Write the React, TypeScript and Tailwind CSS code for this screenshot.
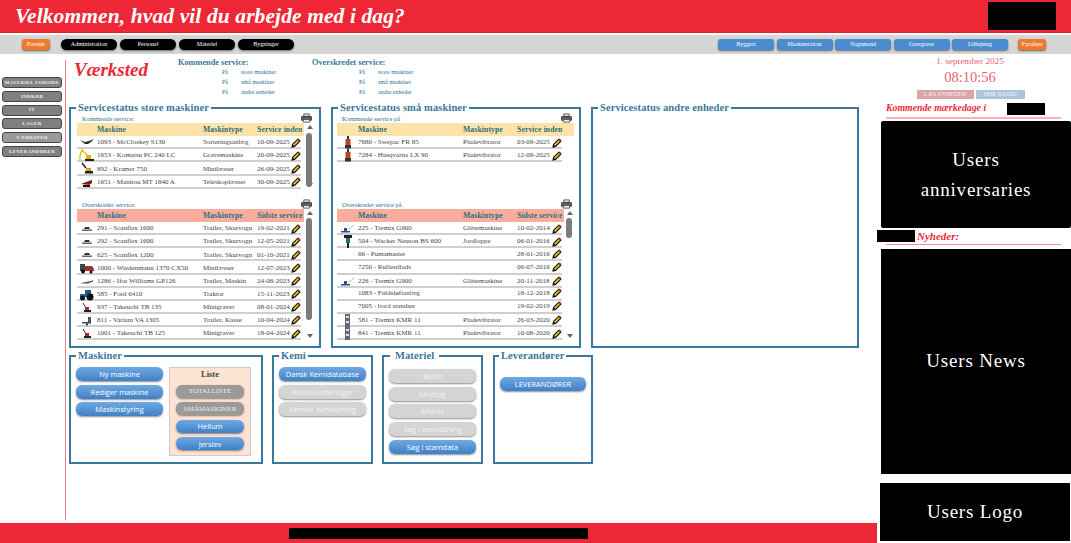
import type { ReactNode } from 'react';

const serif = 'font-["Liberation_Serif",serif]';

type Row = { icon?: string; name: string; type?: string; date: string };

const storeNext: Row[] = [
  { icon: 'screener', name: '1093 - McCloskey S130', type: 'Sorteringsanlæg', date: '10-09-2025' },
  { icon: 'digger', name: '1653 - Komatsu PC 240 LC', type: 'Gravemaskine', date: '20-09-2025' },
  { icon: 'kramer', name: '892 - Kramer 750', type: 'Minilæsser', date: '26-09-2025' },
  { icon: 'loader', name: '1651 - Manitou MT 1840 A', type: 'Teleskoplæsser', date: '30-09-2025' },
];

const storeLate: Row[] = [
  { icon: 'wagon', name: '291 - Scanflex 1600', type: 'Trailer, Skurvogn', date: '19-02-2021' },
  { icon: 'wagon', name: '292 - Scanflex 1600', type: 'Trailer, Skurvogn', date: '12-05-2021' },
  { icon: 'wagon', name: '625 - Scanflex 1200', type: 'Trailer, Skurvogn', date: '01-10-2021' },
  { icon: 'mower', name: '1000 - Wiedenmann 1370 CX50', type: 'Minilæsser', date: '12-07-2023' },
  { icon: 'flat', name: '1286 - Ifor Williams GP126', type: 'Trailer, Maskin', date: '24-08-2023' },
  { icon: 'tractor', name: '585 - Ford 6410', type: 'Traktor', date: '15-11-2023' },
  { icon: 'mini', name: '937 - Takeuchi TB 135', type: 'Minigraver', date: '08-01-2024' },
  { icon: 'box', name: '811 - Variant VA 1305', type: 'Trailer, Kasse', date: '10-04-2024' },
  { icon: 'mini', name: '1001 - Takeuchi TB 125', type: 'Minigraver', date: '18-04-2024' },
];

const smallNext: Row[] = [
  { icon: 'plate', name: '7680 - Swepac FR 85', type: 'Pladevibrator', date: '03-09-2025' },
  { icon: 'plate', name: '7284 - Husqvarna LX 90', type: 'Pladevibrator', date: '12-09-2025' },
];

const smallLate: Row[] = [
  { icon: 'trowel', name: '225 - Tremix G900', type: 'Glittemaskine', date: '10-02-2014' },
  { icon: 'rammer', name: '504 - Wacker Neuson BS 600', type: 'Jordloppe', date: '06-01-2016' },
  { name: '66 - Pumamaster', date: '28-01-2016' },
  { name: '7250 - Rullestilads', date: '06-07-2016' },
  { icon: 'trowel', name: '226 - Tremix G900', type: 'Glittemaskine', date: '20-11-2018' },
  { name: '1083 - Fuldsløftanlæg', date: '18-12-2018' },
  { name: '7005 - bord standser', date: '19-02-2019' },
  { icon: 'kmr', name: '581 - Tremix KMR 11', type: 'Pladevibrator', date: '26-03-2020' },
  { icon: 'kmr', name: '841 - Tremix KMR 11', type: 'Pladevibrator', date: '10-08-2020' },
];

function Machine({ kind }: { kind?: string }) {
  if (!kind) return null;
  return (
    <svg viewBox="0 0 16 13" className="h-[13px] w-[16px]">
      {kind === 'screener' && <path d="M1 4l5 2 4-1 5-2-3 3-3 2H6z" fill="#23351f" />}
      {kind === 'digger' && (
        <g>
          <path d="M1 11V6l2-5 5 5" fill="none" stroke="#e2b100" strokeWidth="1.2" />
          <path d="M7 6h5v4H7z" fill="#e2b100" />
          <path d="M6 10h9v2H6z" fill="#222" />
        </g>
      )}
      {kind === 'kramer' && (
        <g>
          <path d="M3 1l4 5" stroke="#222" strokeWidth="1.5" />
          <path d="M7 6h5v3H7z" fill="#c9a31c" />
          <path d="M6 9h8v2.500H6z" fill="#222" />
        </g>
      )}
      {kind === 'loader' && (
        <g>
          <path d="M2 8l5-2 6-2v3l-3 2z" fill="#7b1d1d" />
          <path d="M4 9h7v2H4z" fill="#111" />
        </g>
      )}
      {kind === 'wagon' && (
        <g>
          <path d="M5 7l1-2h4l1 2z" fill="#333" />
          <path d="M3 7.500h10v1.500H3z" fill="#666" />
        </g>
      )}
      {kind === 'mower' && (
        <g>
          <path d="M1 3h5v7H1z" fill="#444" />
          <path d="M6 5h7l2 3v2H6z" fill="#a33030" />
          <circle cx="4" cy="10.500" r="2" fill="#111" />
          <circle cx="12" cy="11" r="1.500" fill="#111" />
        </g>
      )}
      {kind === 'flat' && <path d="M2 8l10-2 2-1v1.500L9 8.500H2z" fill="#555" />}
      {kind === 'tractor' && (
        <g>
          <path d="M6 2h6v4H6z" fill="#29527f" />
          <path d="M1 6h13v3H1z" fill="#2d6299" />
          <circle cx="11" cy="9" r="3.500" fill="#111" />
          <circle cx="3.500" cy="10" r="2.500" fill="#111" />
        </g>
      )}
      {kind === 'mini' && (
        <g>
          <path d="M4 2l3 5" stroke="#333" strokeWidth="1" />
          <path d="M6 6h4v3H6z" fill="#b22" />
          <path d="M5 9h7v2H5z" fill="#222" />
        </g>
      )}
      {kind === 'box' && (
        <g>
          <path d="M9 3h3v5H9z" fill="#555" />
          <path d="M3 8h9v1.500H3z" fill="#444" />
          <circle cx="8" cy="10.500" r="1" fill="#111" />
        </g>
      )}
      {kind === 'plate' && (
        <g>
          <path d="M7 0h2v3H7z" fill="#333" />
          <path d="M5.500 3h5v6h-5z" fill="#b4432a" />
          <path d="M5 9h6v3.500H5z" fill="#333" />
        </g>
      )}
      {kind === 'trowel' && (
        <g>
          <path d="M8 8l6-5" stroke="#999" strokeWidth=".7" />
          <path d="M4 6h3v3H4z" fill="#26508f" />
          <path d="M1 9h9v1.500H1z" fill="#26508f" />
        </g>
      )}
      {kind === 'rammer' && (
        <g>
          <path d="M4 0h8v3H4z" fill="#222" />
          <path d="M6 3h4v5H6z" fill="#1f6f5c" />
          <path d="M7 8h2v5H7z" fill="#222" />
        </g>
      )}
      {kind === 'kmr' && (
        <g>
          <path d="M5 0h5v13H5z" fill="#667" />
          <path d="M6 2h3v2H6zM6 7h3v2H6z" fill="#dde" />
        </g>
      )}
    </svg>
  );
}

function Pencil() {
  return (
    <svg viewBox="0 0 10 10" className="h-[10px] w-[10px] shrink-0">
      <path d="M1 9l.6-2.600L6.800 1.200l2 2L3.600 8.400z" fill="#d9c81f" stroke="#111" strokeWidth="1.100" />
      <path d="M6.800 1.200l2 2 .7-.9-1.800-1.900z" fill="#d3182a" />
      <path d="M1 9l.6-2.600 2 2z" fill="#111" />
    </svg>
  );
}

function PrinterIcon() {
  return (
    <svg viewBox="0 0 12 10" className="h-[10px] w-[11px]">
      <path d="M3 .500h6v3H3z" fill="#ddd" stroke="#333" strokeWidth=".8" />
      <path d="M.600 3.500h10.800v4H.600z" fill="#666" stroke="#222" strokeWidth=".8" />
      <path d="M2.500 6.500h7v3h-7z" fill="#eee" stroke="#333" strokeWidth=".8" />
    </svg>
  );
}

function Scrollbar({ top, height }: { top: number; height: number }) {
  return (
    <div className="relative ml-[1px] flex w-[10px] flex-col items-center justify-between py-[2px]">
      <svg viewBox="0 0 6 4" className="h-[4px] w-[6px]"><path d="M3 0l3 4H0z" fill="#666" /></svg>
      <div className="absolute left-[1px] w-[6px] rounded-[3px] bg-[#7c7c7c]" style={{ top, height }} />
      <svg viewBox="0 0 6 4" className="h-[4px] w-[6px]"><path d="M3 4l3-4H0z" fill="#666" /></svg>
    </div>
  );
}

function ServiceList(props: {
  label: string;
  headBg: string;
  dateHead: string;
  rows: Row[];
  labelH: string;
  iconCol: string;
  headW: string;
  rowW: string;
  rowH: string;
  bar?: { top: number; height: number };
}) {
  const { label, headBg, dateHead, rows, labelH, iconCol, headW, rowW, rowH, bar } = props;
  return (
    <div>
      <div className={`flex w-[235px] items-end justify-between ${labelH}`}>
        <span className="pl-[5px] text-[6.500px] leading-[8px] text-[#2f6f96]">{label}</span>
        <PrinterIcon />
      </div>
      <div className="flex">
        <div>
          <div className={`grid h-[13px] items-center whitespace-nowrap text-[7.700px] font-bold tracking-[0.1px] text-[#2f6f80] ${iconCol} ${headW} ${headBg}`}>
            <span />
            <span>Maskine</span>
            <span>Maskintype</span>
            <span>{dateHead}</span>
          </div>
          {rows.map((row) => (
            <div
              key={row.name}
              className={`grid items-center border-b-2 border-[#cfcfcf] text-[7px] text-[#444] ${iconCol} ${rowW} ${rowH}`}
            >
              <span className="flex justify-center"><Machine kind={row.icon} /></span>
              <span className="whitespace-nowrap">{row.name}</span>
              <span className="whitespace-nowrap">{row.type}</span>
              <span className="flex items-center justify-between whitespace-nowrap">
                {row.date}
                <Pencil />
              </span>
            </div>
          ))}
        </div>
        {bar && <Scrollbar top={bar.top} height={bar.height} />}
      </div>
    </div>
  );
}

function Panel(props: { title: string; className: string; inner?: string; legend?: string; children?: ReactNode }) {
  const { title, className, inner = '', legend = 'ml-[5px] px-[2px]', children } = props;
  return (
    <fieldset className={`min-w-0 shrink-0 border-2 border-[#3a789c] ${className}`}>
      <legend className={`text-[10.500px] leading-[14px] font-bold tracking-[0.1px] text-[#3a789c] ${legend}`}>
        {title}
      </legend>
      <div className={inner}>{children}</div>
    </fieldset>
  );
}

function Btn({ label, tone = 'blue', h = 'h-[14px]' }: { label: string; tone?: 'blue' | 'off' | 'gray'; h?: string }) {
  const tones = {
    blue: 'bg-gradient-to-b from-[#6fa9e2] to-[#3f80c6] text-white font-["Open_Sans",sans-serif] text-[7.500px]',
    off: 'bg-[#d4d4d4] text-[#f2f2f2] font-["Open_Sans",sans-serif] text-[7.500px]',
    gray: 'bg-[#9a9a9a] text-[#eeeeee] font-["Liberation_Serif",serif] text-[7px] tracking-[0.1px]',
  };
  return (
    <button className={`w-full shrink-0 rounded-[6px] leading-[12px] whitespace-nowrap shadow-[0_1px_2px_rgba(0,0,0,0.45)] ${h} ${tones[tone]}`}>
      {label}
    </button>
  );
}

function NavBtn({ label, className }: { label: string; className: string }) {
  return (
    <button className={`flex h-[11px] items-center justify-center rounded-[3px] text-[6px] text-white shadow-[0_1px_2px_rgba(0,0,0,0.5)] ${className}`}>
      {label}
    </button>
  );
}

function SideBtn({ label, light }: { label: string; light?: boolean }) {
  return (
    <button className={`h-[11px] w-[60px] rounded-[3px] border border-[#444] text-[5px] font-bold tracking-[0.3px] text-[#eeeeee] ${light ? 'bg-[#9a9a9a]' : 'bg-[#808080]'}`}>
      {label}
    </button>
  );
}

function Links({ title, className, list }: { title: string; className: string; list: string }) {
  return (
    <div className={className}>
      <div className="text-[8.300px] leading-[9px] font-bold text-[#3a789c]">{title}</div>
      <div className={list}>
        {['store maskiner', 'små maskiner', 'andre enheder'].map((t) => (
          <div key={t} className="flex h-[10px] items-center text-[6px] text-[#2f6f96]">
            <span className="w-[19px]">På</span>
            <span>{t}</span>
          </div>
        ))}
      </div>
    </div>
  );
}

export default function App() {
  const storeCols = 'grid-cols-[20px_106px_54px_1fr]';
  const smallCols = 'grid-cols-[21px_105px_54px_1fr]';
  return (
    <div className={`flex h-[543px] w-[1071px] flex-col overflow-hidden bg-white ${serif}`}>
      <header className="flex h-[33px] shrink-0 items-center justify-between border-b border-[#e01f30] bg-[#ee2737] pr-[15px] pl-[15px]">
        <h1 className="text-[21.500px] font-bold italic tracking-[0.1px] text-white">Velkommen, hvad vil du arbejde med i dag?</h1>
        <div className="h-[28px] w-[68px] bg-black" />
      </header>

      <nav className="mt-[2px] flex h-[19px] shrink-0 items-center justify-between bg-[#d6d6d6] pr-[25px] pl-[22px]">
        <div className="flex items-center">
          <NavBtn label="Forside" className="mr-[11px] w-[28px] bg-[#ee7b2d]" />
          <div className="flex gap-[3px]">
            {['Administration', 'Personel', 'Materiel', 'Bygninger'].map((t) => (
              <NavBtn key={t} label={t} className="w-[56px] rounded-[6px] bg-black" />
            ))}
          </div>
        </div>
        <div className="flex items-center">
          <div className="flex gap-[2.500px]">
            {['Byggeri', 'Maskinstation', 'Vognmand', 'Grusgrave', 'Udlejning'].map((t) => (
              <NavBtn key={t} label={t} className="w-[56px] bg-[#4a8ccf]" />
            ))}
          </div>
          <NavBtn label="Fyraften" className="ml-[10px] w-[28px] bg-[#ee7b2d]" />
        </div>
      </nav>

      <div className="flex min-h-0 flex-1">
        <div className="flex w-[877px] shrink-0 flex-col">
          <div className="flex min-h-0 flex-1 pt-[6px] pb-[3px]">
            <aside className="flex w-[65px] shrink-0 flex-col gap-[2.800px] pt-[17px] pl-[2px]">
              <SideBtn label="MATERIEL FORSIDE" />
              <SideBtn label="INDKØB" />
              <SideBtn label="IT" />
              <SideBtn label="LAGER" />
              <SideBtn label="VÆRKSTED" light />
              <SideBtn label="LEVERANDØRER" />
            </aside>

            <main className="flex-1 border-l border-[#ee7f8a] pl-[3px]">
              <div className="flex h-[41px]">
                <div className="w-[109px] pl-[5px] text-[19px] leading-[20px] font-bold text-[#ee2737] italic">Værksted</div>
                <Links title="Kommende service:" className="w-[134px] -mt-[2px]" list="ml-[44px]" />
                <Links title="Overskredet service:" className="-mt-[2px]" list="ml-[47px]" />
              </div>

              <div className="flex gap-[10px]">
                <Panel title="Servicestatus store maskiner" className="h-[247px] w-[252px]" inner="pl-[6px]">
                  <div className="flex h-[82px] flex-col">
                    <ServiceList
                      label="Kommende service:"
                      headBg="bg-[#fde3a7]"
                      dateHead="Service inden"
                      rows={storeNext}
                      labelH="h-[8px]"
                      iconCol={storeCols}
                      headW="w-[227px]"
                      rowW="w-[224px]"
                      rowH="h-[13.200px]"
                      bar={{ top: 10, height: 54 }}
                    />
                  </div>
                  <ServiceList
                    label="Overskredet service:"
                    headBg="bg-[#f8ad9d]"
                    dateHead="Sidste service"
                    rows={storeLate}
                    labelH="h-[12px]"
                    iconCol={storeCols}
                    headW="w-[227px]"
                    rowW="w-[224px]"
                    rowH="h-[13.150px]"
                    bar={{ top: 9, height: 102 }}
                  />
                </Panel>

                <Panel title="Servicestatus små maskiner" className="h-[247px] w-[250px]" inner="pl-[4px]">
                  <div className="flex h-[82px] flex-col">
                    <ServiceList
                      label="Kommende service på"
                      headBg="bg-[#fde3a7]"
                      dateHead="Service inden"
                      rows={smallNext}
                      labelH="h-[8px]"
                      iconCol={smallCols}
                      headW="w-[237px]"
                      rowW="w-[225px]"
                      rowH="h-[13.200px]"
                    />
                  </div>
                  <ServiceList
                    label="Overskredet service på"
                    headBg="bg-[#f8ad9d]"
                    dateHead="Sidste service"
                    rows={smallLate}
                    labelH="h-[12px]"
                    iconCol={smallCols}
                    headW="w-[227px]"
                    rowW="w-[225px]"
                    rowH="h-[13.150px]"
                    bar={{ top: 9, height: 20 }}
                  />
                </Panel>

                <Panel title="Servicestatus andre enheder" className="h-[247px] w-[268px]" />
              </div>

              <div className="mt-[1px] flex gap-[9px]">
                <Panel title="Maskiner" className="h-[115px] w-[194px]" inner="flex pt-[4px] pl-[5px]">
                  <div className="flex w-[87px] flex-col gap-[3.500px]">
                    <Btn label="Ny maskine" />
                    <Btn label="Rediger maskine" />
                    <Btn label="Maskinstyring" />
                  </div>
                  <div className="ml-[6px] flex h-[89px] w-[82px] flex-col items-center gap-[4.500px] border border-[#cccccc] bg-[#fde3d3] px-[6px]">
                    <div className="mt-[1px] text-[8.500px] leading-[11px] font-bold text-[#444]">Liste</div>
                    <Btn label="TOTALLISTE" tone="gray" h="h-[13px]" />
                    <Btn label="SMÅMASKINER" tone="gray" h="h-[13px]" />
                    <Btn label="Hellum" h="h-[13px]" />
                    <Btn label="Jerslev" h="h-[13px]" />
                  </div>
                </Panel>

                <Panel title="Kemi" className="h-[115px] w-[101px]" inner="flex flex-col gap-[3.500px] px-[5px] pt-[4px]">
                  <Btn label="Dansk Kemidatabase" />
                  <Btn label="Risikovurderinger" tone="off" />
                  <Btn label="Kemisk beholdning" tone="off" />
                </Panel>

                <Panel
                  title="Materiel"
                  className="h-[115px] w-[101px]"
                  legend="ml-[6px] px-[5px]"
                  inner="flex flex-col gap-[3.700px] px-[5px] pt-[6px]"
                >
                  <Btn label="Bestil" tone="off" />
                  <Btn label="Modtag" tone="off" />
                  <Btn label="Afskriv" tone="off" />
                  <Btn label="Søg i beholdning" tone="off" />
                  <Btn label="Søg i stamdata" />
                </Panel>

                <Panel title="Leverandører" className="ml-[1px] h-[115px] w-[100px]" legend="ml-[4px] px-[2px]" inner="px-[5px] pt-[7px]">
                  <Btn label="LEVERANDØRER" />
                </Panel>
              </div>
            </main>
          </div>

          <footer className="flex h-[20px] shrink-0 items-center justify-start bg-[#ee2737] pl-[289px]">
            <div className="h-[11px] w-[299px] bg-black" />
          </footer>
        </div>

        <aside className="flex w-[194px] shrink-0 flex-col">
          <div className="mt-[1px] pr-[8px] text-center text-[9.200px] leading-[13px] text-[#ee6070]">1. september 2025</div>
          <div className="pr-[8px] text-center text-[14.500px] leading-[19px] text-[#ee6070]">08:10:56</div>
          <div className="mt-[3px] flex justify-center gap-[2px] pr-[7px]">
            <span className="flex h-[9px] w-[57px] items-center justify-center bg-[#dba5a8] text-[6px] text-[#f5eeee]">LÆS NYHEDER</span>
            <span className="flex h-[9px] w-[49px] items-center justify-center bg-[#aec3dd] text-[6px] text-[#f0f3f8]">HØR RADIO</span>
          </div>
          <div className="mt-[1px] ml-[9px] flex h-[19px] w-[175px] items-center border-b-2 border-[#f8b4ba]">
            <span className="text-[9.800px] font-bold text-[#ee2737] italic">Kommende mærkedage i</span>
            <span className="ml-[21px] h-[12px] w-[38px] bg-black" />
          </div>
          <div className="mt-[2px] ml-[4px] flex h-[107px] w-[190px] items-center justify-center rounded-[2px] bg-black text-center text-[19px] leading-[30px] tracking-[0.8px] text-white">
            <span>
              Users
              <br />
              anniversaries
            </span>
          </div>
          <div className="ml-[9px] flex h-[17px] w-[175px] items-center border-b border-[#f08a94]">
            <span className="ml-[-9px] h-[12px] w-[38px] bg-black" />
            <span className="ml-[2px] text-[11px] font-bold text-[#ee2737] italic">Nyheder:</span>
          </div>
          <div className="mt-[4px] ml-[4px] flex h-[225px] w-[190px] items-center justify-center bg-black text-[19px] tracking-[0.8px] text-white">
            Users News
          </div>
          <div className="mt-[9px] ml-[3px] flex h-[58px] w-[190px] items-center justify-center bg-black text-[19px] tracking-[0.8px] text-white">
            Users Logo
          </div>
        </aside>
      </div>
    </div>
  );
}
